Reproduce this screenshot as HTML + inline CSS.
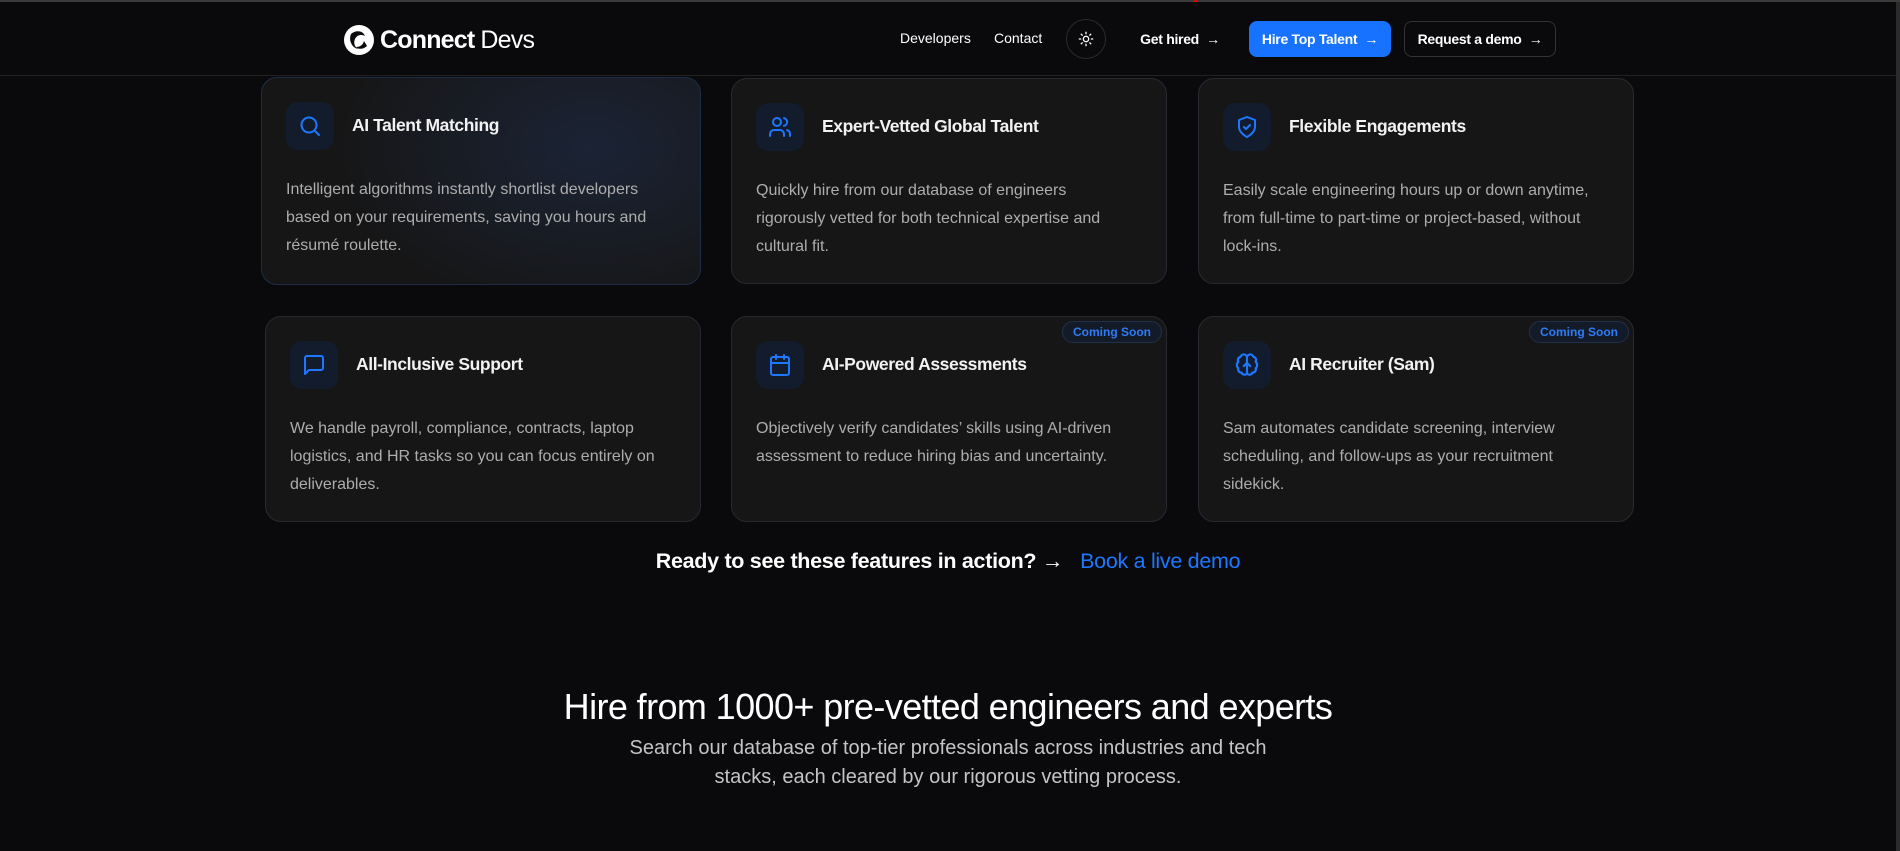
<!DOCTYPE html>
<html><head><meta charset="utf-8"><style>
*{box-sizing:border-box;margin:0;padding:0}
body{width:1900px;height:851px;overflow:hidden;background:#0a0a0c;font-family:"Liberation Sans",sans-serif;color:#fff;position:relative}
.topline{position:absolute;left:0;top:0;width:1900px;height:2px;background:#3a3a3a}
.sb{position:absolute;right:0;top:2px;width:4px;height:849px;background:#2b2b2b}
header{position:absolute;left:0;top:2px;width:1896px;height:74px;border-bottom:1px solid #222;background:#0a0a0c}
.logo{position:absolute;left:343px;top:22px;display:flex;align-items:center;font-size:25px;letter-spacing:-0.8px}
.logo b{font-weight:700;margin-left:5px}
.logo span{font-weight:400;margin-left:6px}
.nav{position:absolute;top:0;font-size:14px;font-weight:400}
.btn{position:absolute;top:19px;height:36px;border-radius:8px;display:flex;align-items:center;justify-content:center;font-size:14px;font-weight:700;letter-spacing:-0.3px}
.card{position:absolute;width:436px;height:206px;background:#161616;border:1px solid #262a30;border-radius:16px}
.ib{position:absolute;left:24px;top:24px;width:48px;height:48px;border-radius:12px;background:#121c2d;display:flex;align-items:center;justify-content:center}
.card h3{position:absolute;left:90px;top:37px;font-size:17.5px;font-weight:700;color:#f2f2f2;letter-spacing:-0.4px}
.card p{position:absolute;left:24px;top:98px;width:376px;font-size:16px;line-height:28px;color:#adadad}
.badge{position:absolute;right:4px;top:4px;height:22px;padding:0 10px;border-radius:11px;background:#131b29;border:1px solid #22304a;color:#2f7bf5;font-size:12px;font-weight:600;line-height:20px}
</style></head><body>
<div class="topline"></div>
<div style="position:absolute;left:1193px;top:0;width:5px;height:5px;border-radius:50%;background:#e00"></div>
<header>
 <div class="logo">
  <svg width="32" height="32" viewBox="0 0 32 32"><circle cx="16" cy="16" r="15" fill="#fff"/><path d="M8 10c4-4 12-4 14 2-4-2-8-1-10 3-2 4 0 9 4 10-6 0-11-8-8-15z" fill="#0a0a0c"/><path d="M24 22c-3 3-8 4-11 1 4 0 7-2 8-6z" fill="#0a0a0c"/></svg>
  <b>Connect</b><span>Devs</span>
 </div>
 <div class="nav" style="left:900px;top:28px">Developers</div>
 <div class="nav" style="left:994px;top:28px">Contact</div>
 <div style="position:absolute;left:1066px;top:17px;width:40px;height:40px;border-radius:50%;border:1px solid #2a2a2a;display:flex;align-items:center;justify-content:center">
  <svg width="16" height="16" viewBox="0 0 24 24" fill="none" stroke="#fff" stroke-width="2" stroke-linecap="round"><circle cx="12" cy="12" r="4"/><path d="M12 2v2M12 20v2M4.9 4.9l1.4 1.4M17.7 17.7l1.4 1.4M2 12h2M20 12h2M4.9 19.1l1.4-1.4M17.7 6.3l1.4-1.4"/></svg>
 </div>
 <div class="btn" style="left:1132px;width:96px">Get hired&nbsp;&nbsp;→</div>
 <div class="btn" style="left:1249px;width:142px;background:#1672ff">Hire Top Talent&nbsp;&nbsp;→</div>
 <div class="btn" style="left:1404px;width:152px;border:1px solid #333">Request a demo&nbsp;&nbsp;→</div>
</header>

<div class="card" style="left:261px;top:77px;width:440px;height:208px;border-color:#1d2d48;background:radial-gradient(ellipse 260px 170px at 330px 70px,#1b2335,#161616)">
 <div class="ib"><svg width="24" height="24" viewBox="0 0 24 24" fill="none" stroke="#1d77ff" stroke-width="2" stroke-linecap="round"><circle cx="11" cy="11" r="7.5"/><path d="M21 21l-4.5-4.5"/></svg></div>
 <h3>AI Talent Matching</h3>
 <p>Intelligent algorithms instantly shortlist developers based on your requirements, saving you hours and résumé roulette.</p>
</div>
<div class="card" style="left:731px;top:78px">
 <div class="ib"><svg width="24" height="24" viewBox="0 0 24 24" fill="none" stroke="#1d77ff" stroke-width="2" stroke-linecap="round"><circle cx="9" cy="7" r="4"/><path d="M2 21v-2a4 4 0 0 1 4-4h6a4 4 0 0 1 4 4v2M16 3.1a4 4 0 0 1 0 7.8M22 21v-2a4 4 0 0 0-3-3.9"/></svg></div>
 <h3>Expert-Vetted Global Talent</h3>
 <p>Quickly hire from our database of engineers rigorously vetted for both technical expertise and cultural fit.</p>
</div>
<div class="card" style="left:1198px;top:78px">
 <div class="ib"><svg width="24" height="24" viewBox="0 0 24 24" fill="none" stroke="#1d77ff" stroke-width="2" stroke-linecap="round" stroke-linejoin="round"><path d="M12 22s8-4 8-10V5l-8-3-8 3v7c0 6 8 10 8 10z"/><path d="M9 12l2 2 4-4"/></svg></div>
 <h3>Flexible Engagements</h3>
 <p>Easily scale engineering hours up or down anytime, from full-time to part-time or project-based, without lock-ins.</p>
</div>
<div class="card" style="left:265px;top:316px;height:206px">
 <div class="ib"><svg width="24" height="24" viewBox="0 0 24 24" fill="none" stroke="#1d77ff" stroke-width="2" stroke-linejoin="round"><path d="M21 15a2 2 0 0 1-2 2H7l-4 4V5a2 2 0 0 1 2-2h14a2 2 0 0 1 2 2z"/></svg></div>
 <h3>All-Inclusive Support</h3>
 <p>We handle payroll, compliance, contracts, laptop logistics, and HR tasks so you can focus entirely on deliverables.</p>
</div>
<div class="card" style="left:731px;top:316px;height:206px">
 <div class="badge">Coming Soon</div>
 <div class="ib"><svg width="24" height="24" viewBox="0 0 24 24" fill="none" stroke="#1d77ff" stroke-width="2" stroke-linecap="round"><rect x="3" y="4" width="18" height="18" rx="2"/><path d="M16 2v4M8 2v4M3 10h18"/></svg></div>
 <h3>AI-Powered Assessments</h3>
 <p>Objectively verify candidates’ skills using AI-driven assessment to reduce hiring bias and uncertainty.</p>
</div>
<div class="card" style="left:1198px;top:316px;height:206px">
 <div class="badge">Coming Soon</div>
 <div class="ib"><svg width="26" height="26" viewBox="0 0 24 24" fill="none" stroke="#1d77ff" stroke-width="2" stroke-linecap="round" stroke-linejoin="round"><path d="M12 5a3 3 0 0 0-5.9-.5A3 3 0 0 0 4 9a4 4 0 0 0 0 6 3 3 0 0 0 3 4 3 3 0 0 0 5 1zM12 5a3 3 0 0 1 5.9-.5A3 3 0 0 1 20 9a4 4 0 0 1 0 6 3 3 0 0 1-3 4 3 3 0 0 1-5 1zM12 5v15M9 13l3-3 3 3"/></svg></div>
 <h3>AI Recruiter (Sam)</h3>
 <p>Sam automates candidate screening, interview scheduling, and follow-ups as your recruitment sidekick.</p>
</div>

<div style="position:absolute;left:0;width:1896px;top:549px;text-align:center;font-size:21.5px;font-weight:700;letter-spacing:-0.3px">Ready to see these features in action? →&nbsp;&nbsp; <span style="color:#1d77ff;font-weight:400">Book a live demo</span></div>
<div style="position:absolute;left:0;width:1896px;top:686px;text-align:center;font-size:36px;letter-spacing:-0.6px">Hire from 1000+ pre-vetted engineers and experts</div>
<div style="position:absolute;left:613px;width:670px;top:734px;text-align:center;font-size:20px;line-height:29px;color:#c4c4c4">Search our database of top-tier professionals across industries and tech stacks, each cleared by our rigorous vetting process.</div>
<div class="sb"></div>
</body></html>
